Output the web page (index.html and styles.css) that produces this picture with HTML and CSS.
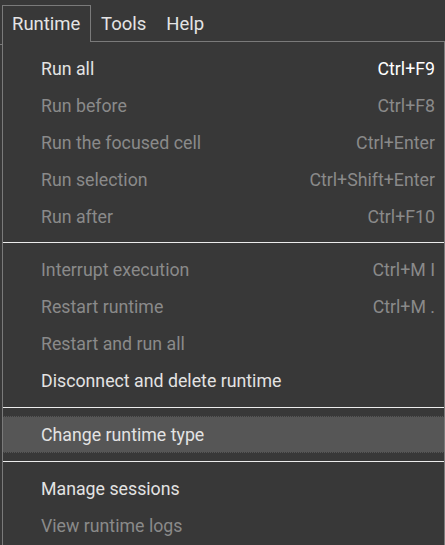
FILE: index.html
```html
<!DOCTYPE html>
<html>
<head>
<meta charset="utf-8">
<link rel="stylesheet" href="styles.css">
</head>
<body>
<div class="menubar">
  <div class="tab active">Runtime</div>
  <div class="tab">Tools</div>
  <div class="tab">Help</div>
</div>
<div class="dropdown">
  <div class="item"><span>Run all</span><span class="key strong">Ctrl+F9</span></div>
  <div class="item off"><span>Run before</span><span class="key">Ctrl+F8</span></div>
  <div class="item off"><span>Run the focused cell</span><span class="key">Ctrl+Enter</span></div>
  <div class="item off"><span>Run selection</span><span class="key">Ctrl+Shift+Enter</span></div>
  <div class="item off"><span>Run after</span><span class="key">Ctrl+F10</span></div>
  <div class="sep tight"></div>
  <div class="item off"><span>Interrupt execution</span><span class="key">Ctrl+M I</span></div>
  <div class="item off"><span>Restart runtime</span><span class="key">Ctrl+M .</span></div>
  <div class="item off"><span>Restart and run all</span></div>
  <div class="item"><span>Disconnect and delete runtime</span></div>
  <div class="sep"></div>
  <div class="item hover"><span>Change runtime type</span></div>
  <div class="sep"></div>
  <div class="item"><span>Manage sessions</span></div>
  <div class="item off"><span>View runtime logs</span></div>
</div>
</body>
</html>
```
FILE: styles.css
```css
html, body {
  margin: 0;
  padding: 0;
  background: #383838;
  width: 445px;
  height: 545px;
  overflow: hidden;
  font-family: Roboto, "Noto Sans", sans-serif;
}
.menubar {
  display: flex;
  align-items: flex-start;
  height: 44px;
  border-bottom: 1px solid #7a7a7a;
  box-sizing: content-box;
}
.tab {
  font-size: 18.5px;
  line-height: 22px;
  color: #e4e4e4;
  margin-top: 6px;
  padding: 7px 10px 0 10px;
  height: 32px;
  box-sizing: border-box;
}
.tab.active {
  position: relative;
  z-index: 2;
  margin-left: 2px;
  margin-top: 5px;
  height: 37px;
  width: 89px;
  padding-left: 9px;
  padding-top: 7px;
  background: #383838;
  border: 1px solid #7a7a7a;
  border-bottom: none;
}
.dropdown {
  position: absolute;
  top: 41px;
  left: 2px;
  right: 0;
  bottom: -20px;
  border: 1px solid #7a7a7a;
  border-bottom: none;
  background: #383838;
  padding-top: 8px;
  z-index: 1;
}
.item {
  display: flex;
  justify-content: space-between;
  align-items: center;
  height: 37px;
  box-sizing: border-box;
  border-top: 1px dotted transparent;
  border-bottom: 1px dotted transparent;
  padding: 0 9px 0 38px;
  font-size: 17.75px;
  color: #e3e3e3;
  white-space: nowrap;
}
.item.off {
  color: #8a8a8a;
}
.key.strong {
  color: #ffffff;
}
.item.hover {
  background: #565656;
  border-top-color: #3a3a3a;
  border-bottom-color: #3a3a3a;
}
.sep {
  height: 1px;
  background: #ececec;
  margin: 8px 0;
}
.sep.tight {
  margin-top: 7px;
}
```
